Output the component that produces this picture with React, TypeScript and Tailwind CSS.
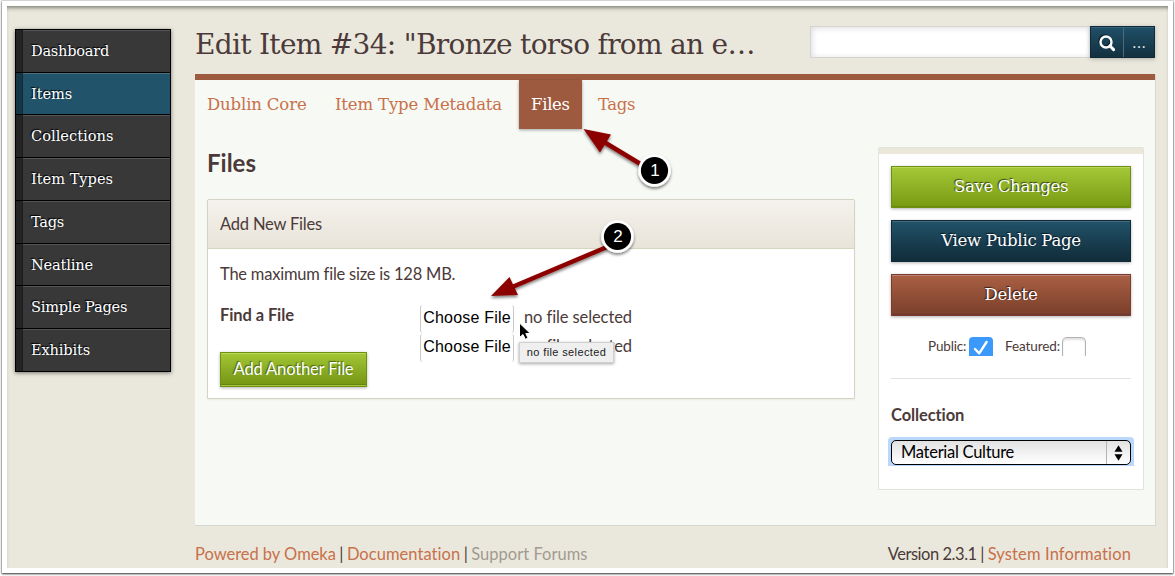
import type { ReactNode } from 'react';

const navItems = [
  { label: 'Dashboard', size: 'h-[43px] tracking-[-0.21px]' },
  { label: 'Items', size: 'h-[42px] tracking-[-0.06px]', active: true },
  { label: 'Collections', size: 'h-[43px] tracking-[0.06px]' },
  { label: 'Item Types', size: 'h-[43px] tracking-[0.03px]' },
  { label: 'Tags', size: 'h-[43px] tracking-[-0.2px]' },
  { label: 'Neatline', size: 'h-[42px] tracking-[-0.11px]' },
  { label: 'Simple Pages', size: 'h-[43px] tracking-[-0.19px]' },
  { label: 'Exhibits', size: 'h-[43px] tracking-[-0.11px]' },
];

const slab = "font-['DejaVu_Serif',serif]";

function SideNav() {
  return (
    <nav className="mt-[23px] ml-2 h-[343px] w-[156px] shrink-0 border border-b-0 border-black bg-black shadow-[0_1px_4px_rgba(0,0,0,0.5)]">
      {navItems.map((item) => (
        <a
          key={item.label}
          className={`flex items-center border-b border-black text-[14.5px] whitespace-nowrap text-white [text-shadow:-1px_-1px_1px_#000] ${slab} ${item.size} ${item.active ? 'bg-[#21536a]' : 'bg-[#383838]'}`}
        >
          <span className="h-full w-[7px] border-r border-black/20 bg-black/35" />
          <span className={`flex h-full grow items-center border-t pl-2 ${item.active ? 'border-[#4a7081]' : 'border-[#555]'}`}>
            {item.label}
          </span>
        </a>
      ))}
    </nav>
  );
}

function SearchBar() {
  return (
    <div className="mt-5 flex h-8 w-[345px]">
      <div className="h-8 w-[280px] border border-r-0 border-[#d5d5d0] bg-white shadow-[inset_1px_1px_6px_rgba(0,0,0,0.14)]" />
      <div className="flex h-8 w-[65px] border border-[#0f2a39] bg-linear-to-b from-[#205068] to-[#12303f] shadow-[0_1px_4px_rgba(0,0,0,0.25)]">
        <button className="flex w-8 items-center justify-center border-t border-[#33627a]">
          <svg width="18" height="18" viewBox="0 0 18 18" fill="none" className="mt-px">
            <circle cx="7" cy="7" r="5.5" stroke="#0a1f2b" strokeWidth="2.4" />
            <circle cx="8" cy="8" r="5.5" stroke="#fff" strokeWidth="2.4" />
            <path d="M12 12 L15.6 15.6" stroke="#fff" strokeWidth="3" strokeLinecap="round" />
          </svg>
        </button>
        <button className={`flex grow items-center justify-center border-t border-l border-t-[#33627a] border-l-[#4b6b7b] text-[14px] text-[#dfe7ea] ${slab}`}>
          …
        </button>
      </div>
    </div>
  );
}

function ActionButton({ tone, children }: { tone: string; children: ReactNode }) {
  return (
    <button
      className={`flex h-[42px] w-full items-center justify-center border bg-linear-to-b text-[16.5px] text-white [text-shadow:-1px_-1px_1px_rgba(0,0,0,0.65)] ${slab} ${tone}`}
    >
      {children}
    </button>
  );
}

function FileInput() {
  return (
    <div className="flex h-7 items-center whitespace-nowrap">
      <span className="flex h-7 w-[94px] items-center justify-center rounded-[3px] border-x border-[#c9c9c9] pb-[3px] font-['Liberation_Sans',Arial,sans-serif] text-base tracking-[0.2px] text-black">
        Choose File
      </span>
      <span className="ml-[10px] pb-[3px] tracking-[-0.1px]">no file selected</span>
    </div>
  );
}

function FilesPanel() {
  return (
    <section className="h-[200px] w-[648px] rounded-t-[2px] border border-[#d5d4c2] bg-white shadow-[0_1px_2px_rgba(0,0,0,0.06)]">
      <div className="flex h-[49px] items-center border-b border-[#d6d5c0] bg-linear-to-b from-[#f5f2ed] to-[#e8e4d9] px-3 pt-px tracking-[-0.19px]">
        Add New Files
      </div>
      <p className="flex h-[49px] items-center px-3 pt-px tracking-[-0.22px]">The maximum file size is 128 MB.</p>
      <div className="flex px-3">
        <div className="w-[200px]">
          <label className="flex h-[34px] items-center font-bold tracking-[-0.1px]">Find a File</label>
          <button className="mt-5 flex h-[35px] w-[147px] items-center justify-center border border-[#70900f] bg-linear-to-b from-[#a3c736] to-[#749410] tracking-[-0.15px] text-white shadow-[inset_0_1px_0_#b8d75c,inset_0_-1px_0_#a6c640,inset_0_-2px_0_#658310,0_1px_3px_rgba(0,0,0,0.3)] [text-shadow:-1px_-1px_1px_rgba(60,80,0,0.8)]">
            Add Another File
          </button>
        </div>
        <div className="mt-[7px] flex flex-col gap-px">
          <FileInput />
          <FileInput />
        </div>
      </div>
    </section>
  );
}

function SavePanel() {
  return (
    <aside className="mt-[18px] ml-[23px] h-[343px] w-[266px] rounded-t-[2px] border border-[#e2e3dd] bg-white">
      <div className="h-[6px] bg-[#ebe8da]" />
      <div className="px-3 pt-3">
        <div className="flex flex-col gap-3">
          <ActionButton tone="border-[#70900f] from-[#a5c937] to-[#789a10] tracking-[-0.32px] shadow-[inset_0_1px_0_#b8d75c,inset_0_-1px_0_#6a8a0e,0_1px_3px_rgba(0,0,0,0.3)]">
            Save Changes
          </ActionButton>
          <ActionButton tone="border-[#0f2a39] from-[#21536a] to-[#112c3a] tracking-[-0.27px] shadow-[inset_0_1px_0_#43697b,0_1px_3px_rgba(0,0,0,0.3)]">
            View Public Page
          </ActionButton>
          <ActionButton tone="border-[#7a3e2a] from-[#aa6044] to-[#7a3f2b] tracking-[-0.23px] shadow-[inset_0_1px_0_#b9807a,inset_0_-1px_0_#6b3535,0_1px_3px_rgba(0,0,0,0.3)]">
            Delete
          </ActionButton>
        </div>
        <div className="mt-[21px] flex h-[19px] items-center pl-[37px] text-[13.5px] whitespace-nowrap">
          <span className="w-[41px] tracking-[-0.15px]">Public:</span>
          <span className="flex h-[19px] w-6 justify-center rounded-t-[4px] bg-[#3b99fc]">
            <svg width="18" height="19" viewBox="0 0 18 19" fill="none">
              <path d="M3 12 L7.2 16.3 L14.6 5" stroke="#fff" strokeWidth="2.4" strokeLinecap="round" strokeLinejoin="round" />
            </svg>
          </span>
          <span className="ml-3 w-[57px] tracking-[-0.1px]">Featured:</span>
          <span className="h-[19px] w-6 rounded-t-[5px] border border-b-0 border-[#b3b3b3] bg-white shadow-[inset_0_2px_2px_rgba(0,0,0,0.12)]" />
        </div>
        <hr className="mt-[22px] border-[#e2e2e2]" />
        <h3 className="mt-6 h-[25px] text-[16.5px] leading-6 font-bold tracking-[-0.1px]">Collection</h3>
        <div className="-mx-[3px] mt-[9px] h-[29px] rounded-t-[4px] bg-[#b9d8fb] px-[3px] pt-[3px]">
          <div className="flex h-[25px] items-center rounded-[5px] border border-black bg-linear-to-b from-[#e2e2e2] via-[#f1f1f1] to-white pl-[9px] tracking-[-0.28px] text-black">
            <span className="grow">Material Culture</span>
            <span className="flex h-[23px] w-6 items-center justify-center border-l border-[#b5b5b5]">
              <svg width="9" height="16" viewBox="0 0 9 16" fill="#000">
                <path d="M4.5 0.3 L8.5 6.8 H0.5 Z" />
                <path d="M4.5 15.7 L8.5 9.2 H0.5 Z" />
              </svg>
            </span>
          </div>
        </div>
      </div>
    </aside>
  );
}

function Annotations() {
  return (
    <svg
      className="pointer-events-none absolute inset-0 z-20"
      width="1175"
      height="576"
      viewBox="0 0 1175 576"
      fontFamily="'Liberation Sans', Arial, sans-serif"
      fontSize="17"
      textAnchor="middle"
    >
      <defs>
        <filter id="drop" x="-20%" y="-20%" width="140%" height="150%">
          <feDropShadow dx="0" dy="2" stdDeviation="1.5" floodOpacity="0.5" />
        </filter>
      </defs>
      <g filter="url(#drop)" fill="#8d0000">
        <path d="M583.5 129 L611 134.5 L600 152.5 Z" />
        <path d="M604 142 L643 165.5" stroke="#8d0000" strokeWidth="4.5" />
        <path d="M491 296 L509.5 277 L518 295 Z" />
        <path d="M511 287.5 L607 247" stroke="#8d0000" strokeWidth="4.5" />
      </g>
      <g filter="url(#drop)">
        <circle cx="654.5" cy="170.5" r="16.3" fill="#fff" />
        <circle cx="617.5" cy="236.5" r="16.3" fill="#fff" />
      </g>
      <circle cx="654.5" cy="170.5" r="13.6" />
      <circle cx="617.5" cy="236.5" r="13.6" />
      <text x="655" y="176.3" fill="#fff">1</text>
      <text x="618" y="242.3" fill="#fff">2</text>
      <path
        d="M519.5 323 V337.5 L523 334.5 L525.3 339.3 L528 338 L525.8 333.5 H530.3 Z"
        fill="#000"
        stroke="#fff"
        strokeWidth="1"
      />
    </svg>
  );
}

export default function App() {
  return (
    <div className="relative h-[576px] w-[1175px] overflow-hidden bg-white pt-px pl-[2px] font-['Lato',sans-serif] text-[16.5px] leading-none text-[#4b3a39]">
      <div className="h-[572px] w-[1171px] bg-white pt-[5px] pl-[5px] shadow-[0_0_1px_1px_rgba(0,0,0,0.12),0_1px_2px_rgba(0,0,0,0.75)]">
        <div className="flex h-[562px] w-[1161px] bg-[#eae8dc] shadow-[inset_0_4px_5px_-3px_rgba(0,0,0,0.6)]">
          <SideNav />
          <div className="ml-6 w-[961px]">
            <header className="flex h-[68px] justify-between pr-px">
              <h1 className={`mt-[22px] text-[28px] leading-[34px] tracking-[-0.7px] whitespace-nowrap ${slab}`}>
                Edit Item #34: "Bronze torso from an e…
              </h1>
              <SearchBar />
            </header>
            <main className="h-[452px] border-r border-b border-[#d6d7cf] bg-[#f7f9f5]">
              <div className="h-[6px] bg-[#9e5a3f]" />
              <div className={`flex h-[49px] text-[16.5px] whitespace-nowrap text-[#c8704a] ${slab}`}>
                <a className="flex w-32 items-center pt-[2px] pl-3 tracking-[-0.14px]">Dublin Core</a>
                <a className="flex w-[196px] items-center pt-[2px] pl-3 tracking-[-0.15px]">Item Type Metadata</a>
                <a className="flex w-[63px] items-center bg-[#9e5a3f] pt-[2px] pl-3 tracking-[-0.3px] text-white shadow-[0_1px_3px_rgba(0,0,0,0.35)]">Files</a>
                <a className="ml-1 flex items-center pt-[2px] pl-3 tracking-[-0.35px]">Tags</a>
              </div>
              <div className="flex pl-3">
                <div>
                  <h2 className="flex h-[70px] items-center pb-[2px] text-2xl font-bold">Files</h2>
                  <FilesPanel />
                </div>
                <SavePanel />
              </div>
            </main>
            <footer className="mt-4 flex h-6 items-center justify-between pr-[25px] whitespace-nowrap">
              <div className="flex text-[#c8704a]">
                <a className="tracking-[-0.03px]">Powered by Omeka</a>
                <span className="w-[11px] text-center text-[#4b3a39]">|</span>
                <a className="tracking-[0.05px]">Documentation</a>
                <span className="w-[11px] text-center text-[#4b3a39]">|</span>
                <span className="tracking-[0.03px] text-[#a39a92]">Support Forums</span>
              </div>
              <div className="flex">
                <span className="tracking-[-0.46px]">Version 2.3.1</span>
                <span className="w-[11px] text-center">|</span>
                <a className="tracking-[0.13px] text-[#c8704a]">System Information</a>
              </div>
            </footer>
          </div>
        </div>
      </div>
      <div className="absolute top-[342px] left-[519px] z-10 flex h-[21px] w-[95px] items-center justify-center border border-[#d0d0d0] bg-[#efefef] font-['Liberation_Sans',Arial,sans-serif] text-[11px] tracking-[0.38px] whitespace-nowrap text-[#222] shadow-[0_1px_3px_rgba(0,0,0,0.35)]">
        no file selected
      </div>
      <Annotations />
    </div>
  );
}
